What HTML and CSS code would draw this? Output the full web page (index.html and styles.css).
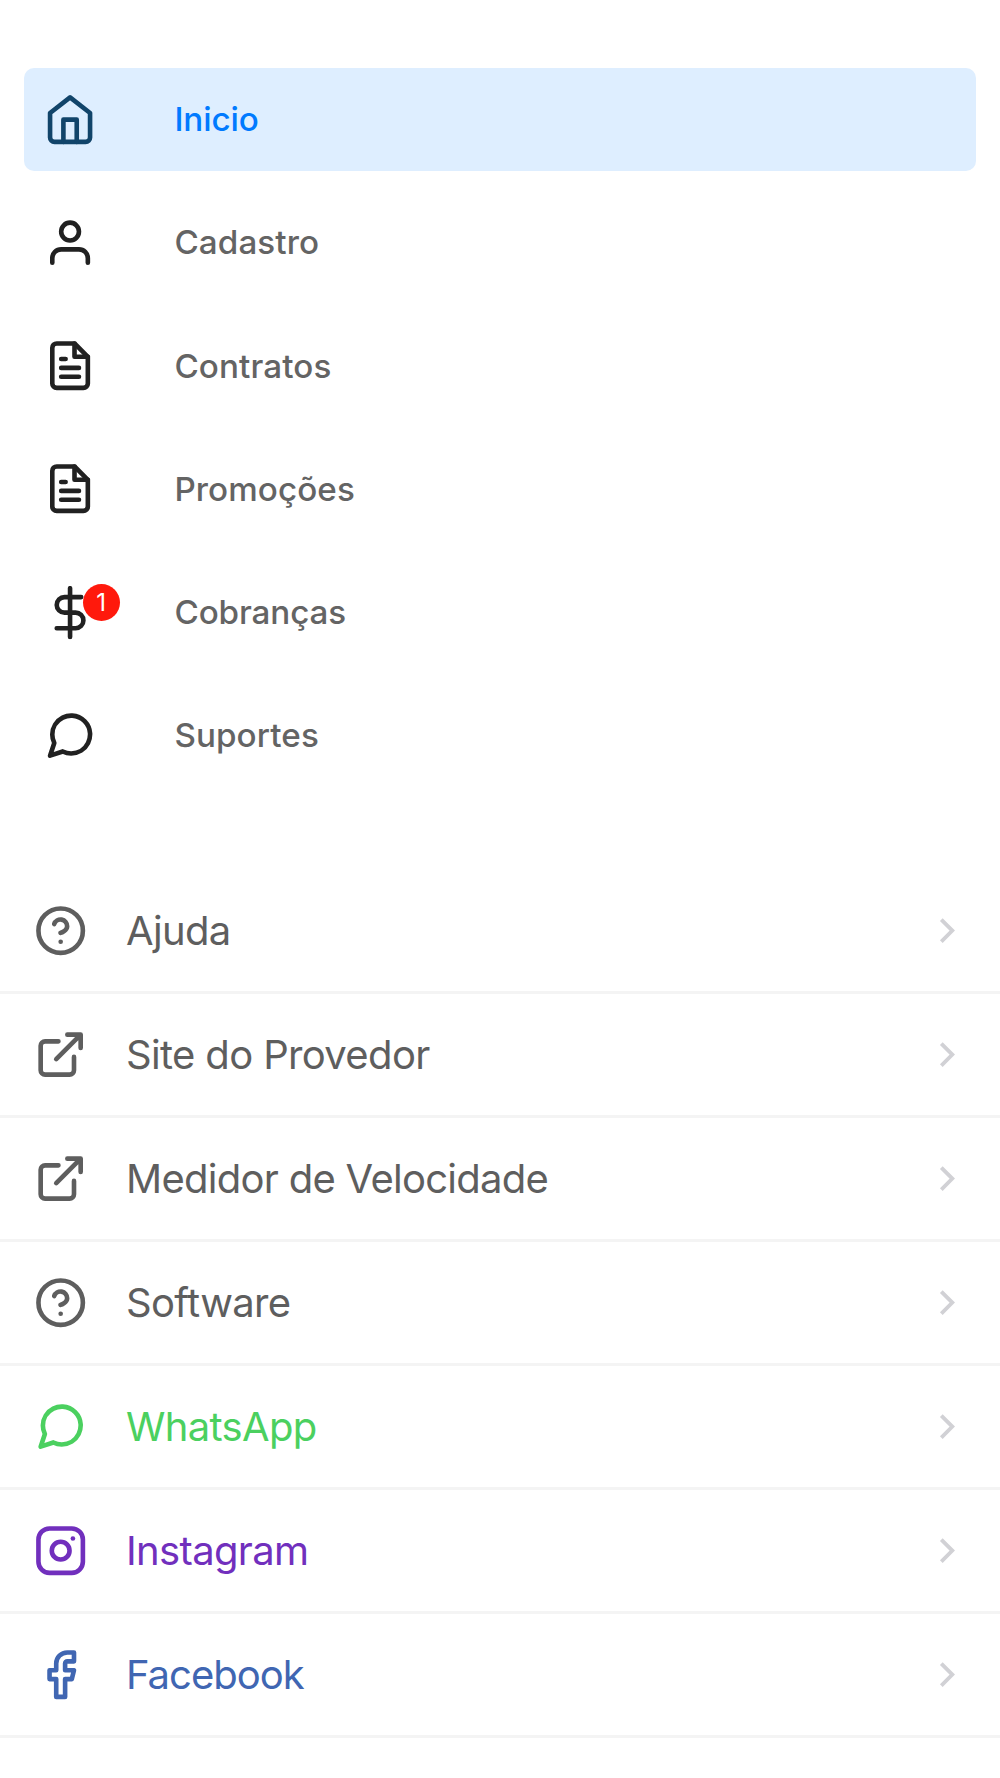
FILE: index.html
```html
<!DOCTYPE html>
<html lang="pt-BR">
<head>
<meta charset="utf-8">
<meta name="viewport" content="width=device-width, initial-scale=1">
<title>Menu</title>
<link rel="stylesheet" href="styles.css">
</head>
<body>
<svg class="sprite" aria-hidden="true">
  <symbol id="home" viewBox="0 0 24 24"><path d="M3 9l9-7 9 7v11a2 2 0 0 1-2 2H5a2 2 0 0 1-2-2z"/><path d="M9 22V12h6v10"/></symbol>
  <symbol id="user" viewBox="0 0 24 24"><path d="M20 21v-2a4 4 0 0 0-4-4H8a4 4 0 0 0-4 4v2"/><circle cx="12" cy="7" r="4"/></symbol>
  <symbol id="file" viewBox="0 0 24 24"><path d="M14 2H6a2 2 0 0 0-2 2v16a2 2 0 0 0 2 2h12a2 2 0 0 0 2-2V8z"/><path d="M14 2v6h6M16 13H8M16 17H8M10 9H8"/></symbol>
  <symbol id="dollar" viewBox="0 0 24 24"><path d="M12 1v22M17 5H9.5a3.5 3.5 0 0 0 0 7h5a3.5 3.5 0 0 1 0 7H6"/></symbol>
  <symbol id="chat" viewBox="0 0 24 24"><path d="M21 11.5a8.38 8.38 0 0 1-.9 3.8 8.5 8.5 0 0 1-7.6 4.7 8.38 8.38 0 0 1-3.8-.9L3 21l1.9-5.7a8.38 8.38 0 0 1-.9-3.8 8.5 8.5 0 0 1 4.7-7.6 8.38 8.38 0 0 1 3.8-.9h.5a8.48 8.48 0 0 1 8 8v.5z"/></symbol>
  <symbol id="help" viewBox="0 0 24 24"><circle cx="12" cy="12" r="10"/><path d="M9.09 9a3 3 0 0 1 5.83 1c0 2-3 3-3 3M12 17h.01"/></symbol>
  <symbol id="external" viewBox="0 0 24 24"><path d="M18 13v6a2 2 0 0 1-2 2H5a2 2 0 0 1-2-2V8a2 2 0 0 1 2-2h6M15 3h6v6M10 14L21 3"/></symbol>
  <symbol id="instagram" viewBox="0 0 24 24"><rect x="2" y="2" width="20" height="20" rx="5"/><circle cx="12" cy="12" r="4"/><path d="M17.5 6.5h.01"/></symbol>
  <symbol id="facebook" viewBox="0 0 24 24"><path d="M18 2h-3a5 5 0 0 0-5 5v3H7v4h3v8h4v-8h3l1-4h-4V7a1 1 0 0 1 1-1h3z"/></symbol>
  <symbol id="chevron" viewBox="0 0 16 26"><path d="M2 2l11 11L2 24"/></symbol>
</svg>
<nav class="menu">
  <a class="menu-item active"><span class="menu-icon"><svg class="icon"><use href="#home"/></svg></span><span class="label">Inicio</span></a>
  <a class="menu-item"><span class="menu-icon"><svg class="icon"><use href="#user"/></svg></span><span class="label">Cadastro</span></a>
  <a class="menu-item"><span class="menu-icon"><svg class="icon"><use href="#file"/></svg></span><span class="label">Contratos</span></a>
  <a class="menu-item"><span class="menu-icon"><svg class="icon"><use href="#file"/></svg></span><span class="label">Promoções</span></a>
  <a class="menu-item billing"><span class="menu-icon"><svg class="icon"><use href="#dollar"/></svg><span class="badge">1</span></span><span class="label">Cobranças</span></a>
  <a class="menu-item"><span class="menu-icon"><svg class="icon"><use href="#chat"/></svg></span><span class="label">Suportes</span></a>
</nav>
<div class="links">
  <a class="link"><svg class="icon"><use href="#help"/></svg><span class="link-text">Ajuda</span><svg class="chevron"><use href="#chevron"/></svg></a>
  <a class="link"><svg class="icon"><use href="#external"/></svg><span class="link-text">Site do Provedor</span><svg class="chevron"><use href="#chevron"/></svg></a>
  <a class="link speed"><svg class="icon"><use href="#external"/></svg><span class="link-text">Medidor de Velocidade</span><svg class="chevron"><use href="#chevron"/></svg></a>
  <a class="link"><svg class="icon"><use href="#help"/></svg><span class="link-text">Software</span><svg class="chevron"><use href="#chevron"/></svg></a>
  <a class="link whatsapp"><svg class="icon"><use href="#chat"/></svg><span class="link-text">WhatsApp</span><svg class="chevron"><use href="#chevron"/></svg></a>
  <a class="link instagram"><svg class="icon"><use href="#instagram"/></svg><span class="link-text">Instagram</span><svg class="chevron"><use href="#chevron"/></svg></a>
  <a class="link facebook"><svg class="icon"><use href="#facebook"/></svg><span class="link-text">Facebook</span><svg class="chevron"><use href="#chevron"/></svg></a>
</div>
</body>
</html>
```
FILE: styles.css
```css
* { box-sizing: border-box; }

body {
  margin: 0;
  min-height: 1778px;
  background: #fff;
  font-family: Inter, "Liberation Sans", sans-serif;
  overflow: hidden;
}

.sprite { display: none; }

.icon {
  display: block;
  flex: none;
  width: 53.33px;
  height: 53.33px;
  overflow: visible;
  fill: none;
  stroke: currentColor;
  stroke-width: 2.08;
  stroke-linecap: round;
  stroke-linejoin: round;
}

.menu {
  display: flex;
  flex-direction: column;
  gap: 19.6px;
  padding: 67.8px 24px 0;
}

.menu-item {
  display: flex;
  align-items: center;
  height: 103.6px;
  padding-left: 19px;
  border-radius: 10px;
  color: #212121;
}

.menu-item.active {
  background: #deeeff;
  color: #11446a;
}

.menu-icon {
  position: relative;
  width: 131.4px;
}

.menu-icon use { transform: translateX(0.4px); }

.badge {
  position: absolute;
  left: 40px;
  top: -2px;
  width: 37.4px;
  height: 37.4px;
  border-radius: 50%;
  background: #ff190c;
  color: #fff;
  font-size: 24px;
  line-height: 37.4px;
  text-align: center;
  text-indent: -1px;
}

.label {
  padding-bottom: 0.8px;
  color: #646464;
  font-size: 33.2px;
  font-weight: 500;
  letter-spacing: 0.1px;
}

.active .label {
  color: #007aff;
  letter-spacing: -0.1px;
}

.billing .label { letter-spacing: -0.1px; }

.links { padding-top: 82.6px; }

.link {
  display: flex;
  align-items: center;
  height: 124px;
  padding: 0 45px 0 33.67px;
  border-bottom: 3px solid #f4f4f4;
  color: #5e5e5e;
}

.link-text {
  flex: 1;
  padding-left: 39px;
  font-size: 40px;
  letter-spacing: -0.65px;
}

.speed .link-text { letter-spacing: -0.72px; }
.facebook .link-text { letter-spacing: -1px; }

.chevron {
  width: 16px;
  height: 26px;
  overflow: visible;
  fill: none;
  stroke: #d1d1d5;
  stroke-width: 3.8;
}

.chevron use { transform: translate(0.3px, 0.6px); }

.whatsapp { color: #4bd05f; }
.instagram { color: #712fbd; }
.facebook { color: #4066b2; }
```
